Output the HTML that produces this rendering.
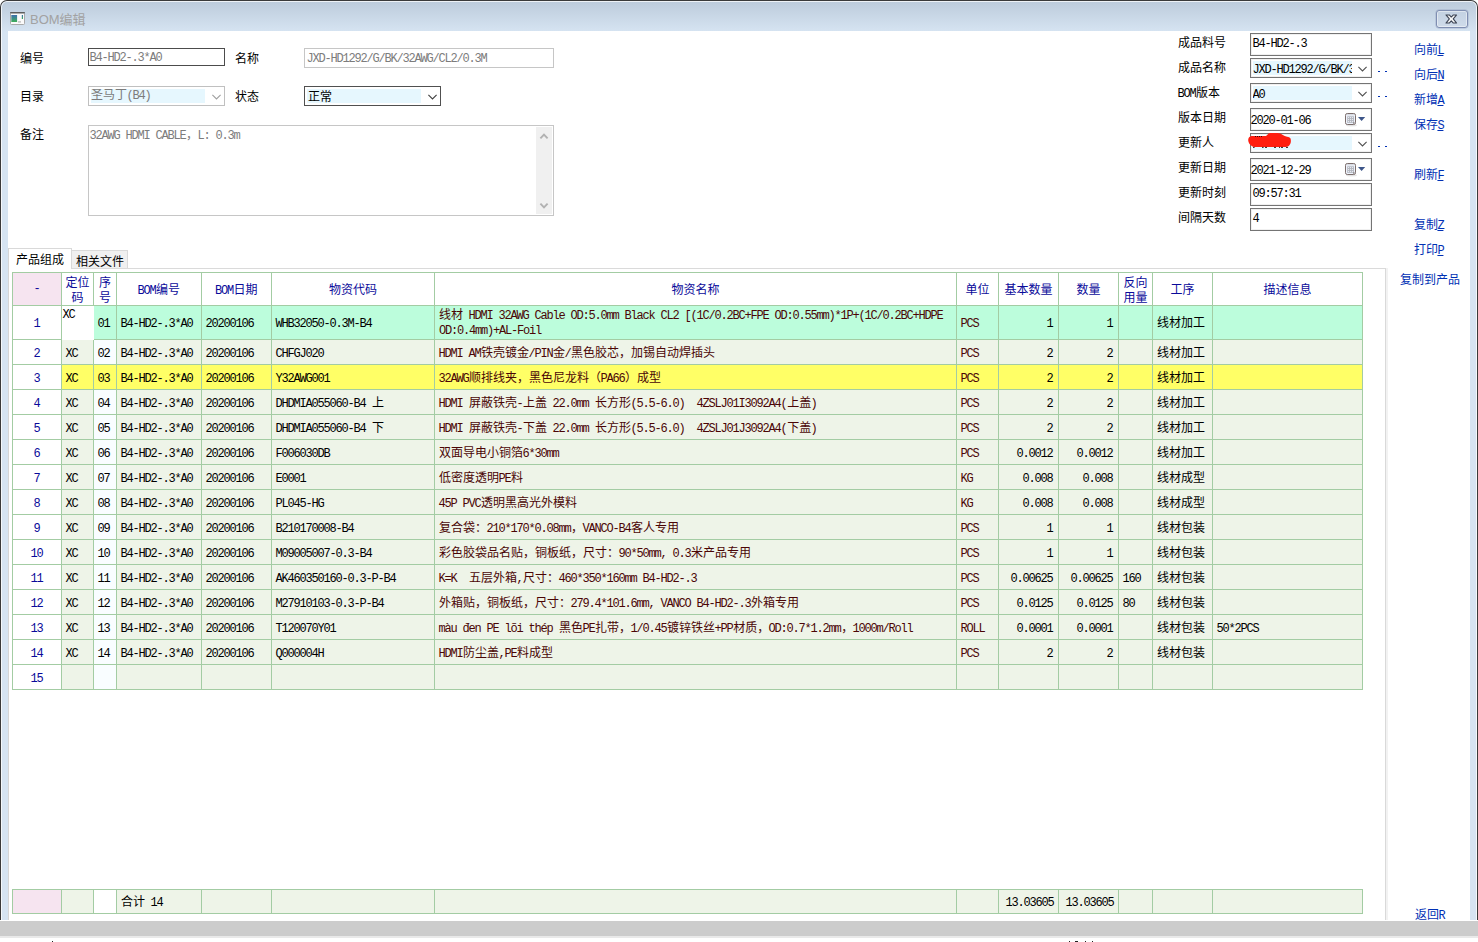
<!DOCTYPE html>
<html lang="zh-CN"><head><meta charset="utf-8"><title>BOM编辑</title>
<style>
html,body{margin:0;padding:0}
body{width:1478px;height:942px;overflow:hidden;position:relative;background:#fff;font-family:"Liberation Mono","Noto Sans CJK SC",monospace;font-size:12px;line-height:12px;color:#000}
i{font-style:normal;letter-spacing:-1.2px;margin-left:-.6px;margin-right:.6px}
u{text-decoration:underline;text-underline-offset:1px}
#win{position:absolute;left:0;top:0;width:1478px;height:920px;box-sizing:border-box;border:1px solid #3a3a3a;border-bottom:none;border-radius:7px 7px 0 0;background:linear-gradient(#bccbdb,#d6e4f2 31px,#d6e4f2 31px);overflow:hidden}
#win:before{content:"";position:absolute;left:0;top:0;right:0;bottom:0;border:1px solid rgba(255,255,255,.75);border-bottom:none;border-radius:6px 6px 0 0}
#client{position:absolute;left:8px;top:31px;width:1462px;height:889px;background:#fff;box-sizing:border-box}
#title{position:absolute;left:29px;top:12px;font-family:"Liberation Sans","Noto Sans CJK SC",sans-serif;font-size:13px;line-height:14px;color:#a2a2a2;white-space:nowrap}
#close{position:absolute;left:1435px;top:9px;width:32px;height:18px;box-sizing:border-box;border:1px solid #7f8eb1;border-radius:3px;box-shadow:inset 0 0 0 1px rgba(255,255,255,.45),0 0 0 .5px rgba(127,142,177,.5);background:linear-gradient(#c3d1e2,#cfdbea)}
.t{position:absolute;white-space:nowrap;line-height:16px}
.g{color:#7c7c7c}
.box{position:absolute;box-sizing:border-box;background:#fff}
.sel{position:absolute;background:#e6f7fe}
.chev{position:absolute}
.grid{position:absolute;background:#a3cca3}
.c{position:absolute;overflow:hidden;display:flex;align-items:center;white-space:pre;box-sizing:border-box;padding:3px 4px 0 4px}
.c.h{justify-content:center;text-align:center;color:#0a0a9a;padding:4px 0 0 0}
.c.h.two{line-height:15px;padding-top:5px}
.c.h b{font-weight:normal;position:relative;top:-2px}
.c.n{justify-content:center;color:#0a0a9a;padding:3px 0 0 0}
.c.m{color:#4a0505}
.c.r{justify-content:flex-end;padding-right:5px}
.c.f{padding-right:4px}
.c.top{align-items:flex-start;padding:3px 0 0 1px}
.c.wrap{white-space:pre-wrap;line-height:15px}
#bar{position:absolute;left:0;top:921px;width:1478px;height:15px;background:#cccccc}
  .mk{position:absolute;top:941px;width:1px;height:1px;background:#222}
#bar2{position:absolute;left:0;top:936px;width:1478px;height:2px;background:#e9e9e9}
</style></head><body>
<div id="win"><svg style="position:absolute;left:9px;top:11px" width="15" height="13" viewBox="0 0 15 13"><defs><linearGradient id="gg" x1="0" y1="0" x2="0" y2="1"><stop offset="0" stop-color="#3c6fae"/><stop offset="1" stop-color="#3fae58"/></linearGradient></defs><rect x="0.5" y="0.5" width="14" height="12" rx="1" fill="#fafafa" stroke="#a9a9a9"/><rect x="0" y="0" width="15" height="1.6" rx="0.8" fill="#5c5c5c"/><rect x="1.3" y="3" width="5.8" height="7" fill="url(#gg)"/><rect x="8" y="9.3" width="3" height="1.2" fill="#b4b4b4"/><rect x="11.8" y="3" width="1.2" height="4" fill="url(#gg)"/></svg><div id="title">BOM编辑</div><div id="close"><svg style="position:absolute;left:8px;top:3px" width="12.6" height="10.2" viewBox="0 0 13 11" preserveAspectRatio="none"><path d="M1 1 L4.4 1 L6.5 3.3 L8.6 1 L12 1 L8.5 5.3 L12 9.8 L8.6 9.8 L6.5 7.4 L4.4 9.8 L1 9.8 L4.5 5.3 Z" fill="#f6f6f6" stroke="#3b4252" stroke-width="1.1" stroke-linejoin="round"/></svg></div></div>
<div id="client"></div>
<div class="t" style="left:20px;top:52px;color:#000">编号</div><div class="t" style="left:235px;top:52px;color:#000">名称</div><div class="t" style="left:20px;top:90px;color:#000">目录</div><div class="t" style="left:235px;top:90px;color:#000">状态</div><div class="t" style="left:20px;top:128px;color:#000">备注</div><div class="box" style="left:88px;top:48px;width:137px;height:18px;border:1px solid #4c4c4c"><div class="t g" style="left:1px;top:1px"><i>B4-HD2-.3*A0</i></div></div><div class="box" style="left:304px;top:48px;width:250px;height:20px;border:1px solid #c6c6c6"><div class="t g" style="left:2px;top:2px"><i>JXD-HD1292/G/BK/32AWG/CL2/0.3M</i></div></div><div class="box" style="left:88px;top:86px;width:137px;height:20px;border:1px solid #c0c0c0"><div class="sel" style="left:2px;top:2px;width:114px;height:14px"></div><div class="t g" style="left:2px;top:1px">圣马丁<i>(B4)</i></div><svg class="chev" style="left:123px;top:7px" width="9" height="6" viewBox="0 0 9 6"><path d="M0.4 0.9 L4.5 5 L8.6 0.9" fill="none" stroke="#a0a0a0" stroke-width="1.1"/></svg></div><div class="box" style="left:304px;top:86px;width:137px;height:20px;border:1px solid #505050"><div class="sel" style="left:2px;top:2px;width:114px;height:14px"></div><div class="t" style="left:3px;top:3px">正常</div><svg class="chev" style="left:123px;top:7px" width="9" height="6" viewBox="0 0 9 6"><path d="M0.4 0.9 L4.5 5 L8.6 0.9" fill="none" stroke="#404040" stroke-width="1.1"/></svg></div><div class="box" style="left:88px;top:125px;width:466px;height:91px;border:1px solid #c6c6c6"><div class="t g" style="left:1px;top:2px"><i>32AWG HDMI CABLE</i>，<i>L: 0.3m</i></div><div style="position:absolute;right:1px;top:1px;width:16px;height:87px;background:#f0f0f0"><svg class="chev" style="left:3px;top:5px" width="10" height="8" viewBox="0 0 10 8"><path d="M1.4 6.4 L5 2.6 L8.6 6.4" fill="none" stroke="#b2b2b2" stroke-width="1.9"/></svg><svg class="chev" style="left:3px;top:75px" width="10" height="8" viewBox="0 0 10 8"><path d="M1.4 1.6 L5 5.4 L8.6 1.6" fill="none" stroke="#b2b2b2" stroke-width="1.9"/></svg></div></div><div style="position:absolute;left:9px;top:268px;width:1376px;height:1px;background:#dadada"></div><div style="position:absolute;left:71px;top:250px;width:57px;height:18px;background:#f0f0f0;border:1px solid #d9d9d9;border-bottom:none;box-sizing:border-box"><div class="t" style="left:4px;top:4px">相关文件</div></div><div style="position:absolute;left:8px;top:248px;width:64px;height:21px;background:#fff;border:1px solid #d9d9d9;border-bottom:none;box-sizing:border-box"><div class="t" style="left:7px;top:4px">产品组成</div></div><div style="position:absolute;left:8px;top:248px;width:1px;height:672px;background:#d6d6d6"></div><div style="position:absolute;left:1385px;top:268px;width:1px;height:652px;background:#d9d9d9"></div><div style="position:absolute;left:1386px;top:268px;width:2px;height:652px;background:#f2f2f2"></div><div class="t" style="left:1178px;top:36px;color:#000">成品料号</div><div class="t" style="left:1178px;top:61px;color:#000">成品名称</div><div class="t" style="left:1178px;top:86px;color:#000"><i>BOM</i>版本</div><div class="t" style="left:1178px;top:111px;color:#000">版本日期</div><div class="t" style="left:1178px;top:136px;color:#000">更新人</div><div class="t" style="left:1178px;top:161px;color:#000">更新日期</div><div class="t" style="left:1178px;top:186px;color:#000">更新时刻</div><div class="t" style="left:1178px;top:211px;color:#000">间隔天数</div><div class="box" style="left:1250px;top:33px;width:122px;height:23px;border:1px solid #747474;box-shadow:inset 0 0 0 1px #f0f0f0"><div class="t" style="left:2px;top:2px"><i>B4-HD2-.3</i></div></div><div class="box" style="left:1250px;top:58px;width:122px;height:20px;border:1px solid #747474;box-shadow:inset 0 0 0 1px #f0f0f0"><div class="sel" style="left:2px;top:2px;width:99px;height:14px;overflow:hidden"><div class="t" style="left:0px;top:1px"><i>JXD-HD1292/G/BK/32AWG</i></div></div><svg class="chev" style="left:107px;top:7px" width="9" height="6" viewBox="0 0 9 6"><path d="M0.4 0.9 L4.5 5 L8.6 0.9" fill="none" stroke="#505050" stroke-width="1.1"/></svg></div><div style="position:absolute;left:1378px;top:71px;width:2px;height:1px;background:#0030b4"></div><div style="position:absolute;left:1385px;top:71px;width:2px;height:1px;background:#0030b4"></div><div class="box" style="left:1250px;top:83px;width:122px;height:20px;border:1px solid #747474;box-shadow:inset 0 0 0 1px #f0f0f0"><div class="sel" style="left:2px;top:2px;width:99px;height:14px;overflow:hidden"><div class="t" style="left:0px;top:1px"><i>A0</i></div></div><svg class="chev" style="left:107px;top:7px" width="9" height="6" viewBox="0 0 9 6"><path d="M0.4 0.9 L4.5 5 L8.6 0.9" fill="none" stroke="#505050" stroke-width="1.1"/></svg></div><div style="position:absolute;left:1378px;top:96px;width:2px;height:1px;background:#0030b4"></div><div style="position:absolute;left:1385px;top:96px;width:2px;height:1px;background:#0030b4"></div><div class="box" style="left:1250px;top:108px;width:122px;height:23px;border:1px solid #747474;box-shadow:inset 0 0 0 1px #f0f0f0"><div class="t" style="left:0px;top:4px"><i>2020-01-06</i></div><svg style="position:absolute;left:93px;top:3px" width="26" height="15" viewBox="0 0 26 15"><ellipse cx="7.5" cy="13.2" rx="5.5" ry="1.2" fill="#000" opacity=".10"/><rect x="1.5" y="1.5" width="10" height="11" rx="1.8" fill="#eef3fc" stroke="#7b6d6b" stroke-width="1"/><path d="M2.8 2.8 H10.2" stroke="#c9c9cf" stroke-width="0.8"/><rect x="3.2" y="4.3" width="6.8" height="6.6" fill="#b3b6bf"/><g fill="#f4f6fb"><rect x="4.1" y="5.1" width="1" height="1"/><rect x="6.1" y="5.1" width="1" height="1"/><rect x="8.1" y="5.1" width="1" height="1"/><rect x="4.1" y="7.1" width="1" height="1"/><rect x="6.1" y="7.1" width="1" height="1"/><rect x="8.1" y="7.1" width="1" height="1"/><rect x="4.1" y="9.1" width="1" height="1"/><rect x="6.1" y="9.1" width="1" height="1"/><rect x="8.1" y="9.1" width="1" height="1"/></g><path d="M9.2 12 L9.2 10.4 L11 10.4 Z" fill="#6b5d5b"/><path d="M14 5 H21.2 L17.6 9 Z" fill="#3d5689"/></svg></div><div class="box" style="left:1250px;top:133px;width:122px;height:20px;border:1px solid #747474;box-shadow:inset 0 0 0 1px #f0f0f0"><div class="sel" style="left:2px;top:2px;width:99px;height:14px;overflow:hidden"><div class="t" style="left:0px;top:1px"></div></div><svg class="chev" style="left:107px;top:7px" width="9" height="6" viewBox="0 0 9 6"><path d="M0.4 0.9 L4.5 5 L8.6 0.9" fill="none" stroke="#505050" stroke-width="1.1"/></svg></div><div style="position:absolute;left:1378px;top:146px;width:2px;height:1px;background:#0030b4"></div><div style="position:absolute;left:1385px;top:146px;width:2px;height:1px;background:#0030b4"></div><div class="box" style="left:1250px;top:158px;width:122px;height:23px;border:1px solid #747474;box-shadow:inset 0 0 0 1px #f0f0f0"><div class="t" style="left:0px;top:4px"><i>2021-12-29</i></div><svg style="position:absolute;left:93px;top:3px" width="26" height="15" viewBox="0 0 26 15"><ellipse cx="7.5" cy="13.2" rx="5.5" ry="1.2" fill="#000" opacity=".10"/><rect x="1.5" y="1.5" width="10" height="11" rx="1.8" fill="#eef3fc" stroke="#7b6d6b" stroke-width="1"/><path d="M2.8 2.8 H10.2" stroke="#c9c9cf" stroke-width="0.8"/><rect x="3.2" y="4.3" width="6.8" height="6.6" fill="#b3b6bf"/><g fill="#f4f6fb"><rect x="4.1" y="5.1" width="1" height="1"/><rect x="6.1" y="5.1" width="1" height="1"/><rect x="8.1" y="5.1" width="1" height="1"/><rect x="4.1" y="7.1" width="1" height="1"/><rect x="6.1" y="7.1" width="1" height="1"/><rect x="8.1" y="7.1" width="1" height="1"/><rect x="4.1" y="9.1" width="1" height="1"/><rect x="6.1" y="9.1" width="1" height="1"/><rect x="8.1" y="9.1" width="1" height="1"/></g><path d="M9.2 12 L9.2 10.4 L11 10.4 Z" fill="#6b5d5b"/><path d="M14 5 H21.2 L17.6 9 Z" fill="#3d5689"/></svg></div><div class="box" style="left:1250px;top:183px;width:122px;height:23px;border:1px solid #747474;box-shadow:inset 0 0 0 1px #f0f0f0"><div class="t" style="left:2px;top:2px"><i>09:57:31</i></div></div><div class="box" style="left:1250px;top:208px;width:122px;height:23px;border:1px solid #747474;box-shadow:inset 0 0 0 1px #f0f0f0"><div class="t" style="left:2px;top:2px"><i>4</i></div></div><svg style="position:absolute;left:1246px;top:131px" width="48" height="20" viewBox="0 0 48 20"><path d="M2.2 9 C2.3 7.4 3 6.2 4.2 5.6 C5 5.2 6 5.1 7 5.1 L19.6 5.1 C20.8 5.1 21.2 4 22 3.1 C22.8 2.4 23.6 2.1 24.8 2.1 L31.5 2.1 C33.4 2.2 34.8 3 36.4 3.7 C38 4.5 39.4 5.3 41 5.7 C42.6 6 43.8 6.2 44.4 7.2 C45 8.4 45 10.6 44.6 12 C44.2 13.6 43.2 14.8 41.8 15.5 C41 15.9 40.4 15.9 39.6 15.9 L8.4 15.9 C6.6 15.8 5.4 15 4.2 13.8 C3 12.6 2.2 10.8 2.2 9 Z" fill="#ff1e10"/><path d="M9 5.5h1M11 5.5h1M13 5.5h1M15 5.5h1M7 16.4h1.6M16 16.4h1.6M19 16.4h2M28 16.4h2M33 16.4h1M35 16.4h2M40 16.4h2" stroke="#1a0a0a" stroke-width="0.9"/></svg><div class="t" style="left:1414px;top:43px;color:#0030b4">向前<i><u>L</u></i></div><div class="t" style="left:1414px;top:68px;color:#0030b4">向后<i><u>N</u></i></div><div class="t" style="left:1414px;top:93px;color:#0030b4">新增<i><u>A</u></i></div><div class="t" style="left:1414px;top:118px;color:#0030b4">保存<i><u>S</u></i></div><div class="t" style="left:1414px;top:168px;color:#0030b4">刷新<i><u>F</u></i></div><div class="t" style="left:1414px;top:218px;color:#0030b4">复制<i><u>Z</u></i></div><div class="t" style="left:1414px;top:243px;color:#0030b4">打印<i><u>P</u></i></div><div class="t" style="left:1400px;top:273px;color:#0030b4">复制到产品</div><div class="t" style="left:1415px;top:908px;color:#0030b4">返回<i>R</i></div>
<div class="grid" style="left:12px;top:272px;width:1351px;height:418px"></div><div class="c h" style="left:13px;top:273px;width:48px;height:32px;background:#f6e4f0;"><span><b><i>-</i></b></span></div><div class="c h two" style="left:62px;top:273px;width:31px;height:32px;background:#fff;"><span>定位<br>码</span></div><div class="c h two" style="left:94px;top:273px;width:22px;height:32px;background:#fff;"><span>序<br>号</span></div><div class="c h" style="left:117px;top:273px;width:84px;height:32px;background:#fff;"><span><i>BOM</i>编号</span></div><div class="c h" style="left:202px;top:273px;width:69px;height:32px;background:#fff;"><span><i>BOM</i>日期</span></div><div class="c h" style="left:272px;top:273px;width:162px;height:32px;background:#fff;"><span>物资代码</span></div><div class="c h" style="left:435px;top:273px;width:521px;height:32px;background:#fff;"><span>物资名称</span></div><div class="c h" style="left:957px;top:273px;width:41px;height:32px;background:#fff;"><span>单位</span></div><div class="c h" style="left:999px;top:273px;width:59px;height:32px;background:#fff;"><span>基本数量</span></div><div class="c h" style="left:1059px;top:273px;width:59px;height:32px;background:#fff;"><span>数量</span></div><div class="c h two" style="left:1119px;top:273px;width:33px;height:32px;background:#fff;"><span>反向<br>用量</span></div><div class="c h" style="left:1153px;top:273px;width:59px;height:32px;background:#fff;"><span>工序</span></div><div class="c h" style="left:1213px;top:273px;width:149px;height:32px;background:#fff;"><span>描述信息</span></div><div class="c n" style="left:13px;top:306px;width:48px;height:33px;background:#fff;"><span><i>1</i></span></div><div class="c top" style="left:62px;top:306px;width:32px;height:34px;background:#fff;z-index:2"><span><i>XC</i></span></div><div class="c " style="left:94px;top:306px;width:22px;height:33px;background:#bcfddc;"><span><i>01</i></span></div><div class="c " style="left:117px;top:306px;width:84px;height:33px;background:#bcfddc;"><span><i>B4-HD2-.3*A0</i></span></div><div class="c " style="left:202px;top:306px;width:69px;height:33px;background:#bcfddc;"><span><i>20200106</i></span></div><div class="c " style="left:272px;top:306px;width:162px;height:33px;background:#bcfddc;"><span><i>WHB32050-0.3M-B4</i></span></div><div class="c  m wrap" style="left:435px;top:306px;width:521px;height:33px;background:#bcfddc;"><span>线材<i> HDMI 32AWG Cable OD:5.0mm Black CL2 [(1C/0.2BC+FPE OD:0.55mm)*1P+(1C/0.2BC+HDPE OD:0.4mm)+AL-Foil</i></span></div><div class="c  m" style="left:957px;top:306px;width:41px;height:33px;background:#bcfddc;"><span><i>PCS</i></span></div><div class="c  r" style="left:999px;top:306px;width:59px;height:33px;background:#bcfddc;"><span><i>1</i></span></div><div class="c  r" style="left:1059px;top:306px;width:59px;height:33px;background:#bcfddc;"><span><i>1</i></span></div><div class="c " style="left:1119px;top:306px;width:33px;height:33px;background:#bcfddc;"></div><div class="c " style="left:1153px;top:306px;width:59px;height:33px;background:#bcfddc;"><span>线材加工</span></div><div class="c " style="left:1213px;top:306px;width:149px;height:33px;background:#bcfddc;"></div><div class="c n" style="left:13px;top:340px;width:48px;height:24px;background:#fff;"><span><i>2</i></span></div><div class="c " style="left:62px;top:340px;width:31px;height:24px;background:#eef4e8;"><span><i>XC</i></span></div><div class="c " style="left:94px;top:340px;width:22px;height:24px;background:#f9fdff;"><span><i>02</i></span></div><div class="c " style="left:117px;top:340px;width:84px;height:24px;background:#eef4e8;"><span><i>B4-HD2-.3*A0</i></span></div><div class="c " style="left:202px;top:340px;width:69px;height:24px;background:#eef4e8;"><span><i>20200106</i></span></div><div class="c " style="left:272px;top:340px;width:162px;height:24px;background:#eef4e8;"><span><i>CHFGJ020</i></span></div><div class="c  m" style="left:435px;top:340px;width:521px;height:24px;background:#eef4e8;"><span><i>HDMI AM</i>铁壳镀金<i>/PIN</i>金<i>/</i>黑色胶芯，加锡自动焊插头</span></div><div class="c  m" style="left:957px;top:340px;width:41px;height:24px;background:#eef4e8;"><span><i>PCS</i></span></div><div class="c  r" style="left:999px;top:340px;width:59px;height:24px;background:#eef4e8;"><span><i>2</i></span></div><div class="c  r" style="left:1059px;top:340px;width:59px;height:24px;background:#eef4e8;"><span><i>2</i></span></div><div class="c " style="left:1119px;top:340px;width:33px;height:24px;background:#eef4e8;"></div><div class="c " style="left:1153px;top:340px;width:59px;height:24px;background:#eef4e8;"><span>线材加工</span></div><div class="c " style="left:1213px;top:340px;width:149px;height:24px;background:#eef4e8;"></div><div class="c n" style="left:13px;top:365px;width:48px;height:24px;background:#fff;"><span><i>3</i></span></div><div class="c " style="left:62px;top:365px;width:31px;height:24px;background:#ffff66;"><span><i>XC</i></span></div><div class="c " style="left:94px;top:365px;width:22px;height:24px;background:#ffff66;"><span><i>03</i></span></div><div class="c " style="left:117px;top:365px;width:84px;height:24px;background:#ffff66;"><span><i>B4-HD2-.3*A0</i></span></div><div class="c " style="left:202px;top:365px;width:69px;height:24px;background:#ffff66;"><span><i>20200106</i></span></div><div class="c " style="left:272px;top:365px;width:162px;height:24px;background:#ffff66;"><span><i>Y32AWG001</i></span></div><div class="c  m" style="left:435px;top:365px;width:521px;height:24px;background:#ffff66;"><span><i>32AWG</i>顺排线夹，黑色尼龙料（<i>PA66</i>）成型</span></div><div class="c  m" style="left:957px;top:365px;width:41px;height:24px;background:#ffff66;"><span><i>PCS</i></span></div><div class="c  r" style="left:999px;top:365px;width:59px;height:24px;background:#ffff66;"><span><i>2</i></span></div><div class="c  r" style="left:1059px;top:365px;width:59px;height:24px;background:#ffff66;"><span><i>2</i></span></div><div class="c " style="left:1119px;top:365px;width:33px;height:24px;background:#ffff66;"></div><div class="c " style="left:1153px;top:365px;width:59px;height:24px;background:#ffff66;"><span>线材加工</span></div><div class="c " style="left:1213px;top:365px;width:149px;height:24px;background:#ffff66;"></div><div class="c n" style="left:13px;top:390px;width:48px;height:24px;background:#fff;"><span><i>4</i></span></div><div class="c " style="left:62px;top:390px;width:31px;height:24px;background:#eef4e8;"><span><i>XC</i></span></div><div class="c " style="left:94px;top:390px;width:22px;height:24px;background:#f9fdff;"><span><i>04</i></span></div><div class="c " style="left:117px;top:390px;width:84px;height:24px;background:#eef4e8;"><span><i>B4-HD2-.3*A0</i></span></div><div class="c " style="left:202px;top:390px;width:69px;height:24px;background:#eef4e8;"><span><i>20200106</i></span></div><div class="c " style="left:272px;top:390px;width:162px;height:24px;background:#eef4e8;"><span><i>DHDMIA055060-B4 </i>上</span></div><div class="c  m" style="left:435px;top:390px;width:521px;height:24px;background:#eef4e8;"><span><i>HDMI </i>屏蔽铁壳<i>-</i>上盖<i> 22.0mm </i>长方形<i>(5.5-6.0)  4ZSLJ01I3092A4(</i>上盖<i>)</i></span></div><div class="c  m" style="left:957px;top:390px;width:41px;height:24px;background:#eef4e8;"><span><i>PCS</i></span></div><div class="c  r" style="left:999px;top:390px;width:59px;height:24px;background:#eef4e8;"><span><i>2</i></span></div><div class="c  r" style="left:1059px;top:390px;width:59px;height:24px;background:#eef4e8;"><span><i>2</i></span></div><div class="c " style="left:1119px;top:390px;width:33px;height:24px;background:#eef4e8;"></div><div class="c " style="left:1153px;top:390px;width:59px;height:24px;background:#eef4e8;"><span>线材加工</span></div><div class="c " style="left:1213px;top:390px;width:149px;height:24px;background:#eef4e8;"></div><div class="c n" style="left:13px;top:415px;width:48px;height:24px;background:#fff;"><span><i>5</i></span></div><div class="c " style="left:62px;top:415px;width:31px;height:24px;background:#eef4e8;"><span><i>XC</i></span></div><div class="c " style="left:94px;top:415px;width:22px;height:24px;background:#f9fdff;"><span><i>05</i></span></div><div class="c " style="left:117px;top:415px;width:84px;height:24px;background:#eef4e8;"><span><i>B4-HD2-.3*A0</i></span></div><div class="c " style="left:202px;top:415px;width:69px;height:24px;background:#eef4e8;"><span><i>20200106</i></span></div><div class="c " style="left:272px;top:415px;width:162px;height:24px;background:#eef4e8;"><span><i>DHDMIA055060-B4 </i>下</span></div><div class="c  m" style="left:435px;top:415px;width:521px;height:24px;background:#eef4e8;"><span><i>HDMI </i>屏蔽铁壳<i>-</i>下盖<i> 22.0mm </i>长方形<i>(5.5-6.0)  4ZSLJ01J3092A4(</i>下盖<i>)</i></span></div><div class="c  m" style="left:957px;top:415px;width:41px;height:24px;background:#eef4e8;"><span><i>PCS</i></span></div><div class="c  r" style="left:999px;top:415px;width:59px;height:24px;background:#eef4e8;"><span><i>2</i></span></div><div class="c  r" style="left:1059px;top:415px;width:59px;height:24px;background:#eef4e8;"><span><i>2</i></span></div><div class="c " style="left:1119px;top:415px;width:33px;height:24px;background:#eef4e8;"></div><div class="c " style="left:1153px;top:415px;width:59px;height:24px;background:#eef4e8;"><span>线材加工</span></div><div class="c " style="left:1213px;top:415px;width:149px;height:24px;background:#eef4e8;"></div><div class="c n" style="left:13px;top:440px;width:48px;height:24px;background:#fff;"><span><i>6</i></span></div><div class="c " style="left:62px;top:440px;width:31px;height:24px;background:#eef4e8;"><span><i>XC</i></span></div><div class="c " style="left:94px;top:440px;width:22px;height:24px;background:#f9fdff;"><span><i>06</i></span></div><div class="c " style="left:117px;top:440px;width:84px;height:24px;background:#eef4e8;"><span><i>B4-HD2-.3*A0</i></span></div><div class="c " style="left:202px;top:440px;width:69px;height:24px;background:#eef4e8;"><span><i>20200106</i></span></div><div class="c " style="left:272px;top:440px;width:162px;height:24px;background:#eef4e8;"><span><i>F006030DB</i></span></div><div class="c  m" style="left:435px;top:440px;width:521px;height:24px;background:#eef4e8;"><span>双面导电小铜箔<i>6*30mm</i></span></div><div class="c  m" style="left:957px;top:440px;width:41px;height:24px;background:#eef4e8;"><span><i>PCS</i></span></div><div class="c  r" style="left:999px;top:440px;width:59px;height:24px;background:#eef4e8;"><span><i>0.0012</i></span></div><div class="c  r" style="left:1059px;top:440px;width:59px;height:24px;background:#eef4e8;"><span><i>0.0012</i></span></div><div class="c " style="left:1119px;top:440px;width:33px;height:24px;background:#eef4e8;"></div><div class="c " style="left:1153px;top:440px;width:59px;height:24px;background:#eef4e8;"><span>线材加工</span></div><div class="c " style="left:1213px;top:440px;width:149px;height:24px;background:#eef4e8;"></div><div class="c n" style="left:13px;top:465px;width:48px;height:24px;background:#fff;"><span><i>7</i></span></div><div class="c " style="left:62px;top:465px;width:31px;height:24px;background:#eef4e8;"><span><i>XC</i></span></div><div class="c " style="left:94px;top:465px;width:22px;height:24px;background:#f9fdff;"><span><i>07</i></span></div><div class="c " style="left:117px;top:465px;width:84px;height:24px;background:#eef4e8;"><span><i>B4-HD2-.3*A0</i></span></div><div class="c " style="left:202px;top:465px;width:69px;height:24px;background:#eef4e8;"><span><i>20200106</i></span></div><div class="c " style="left:272px;top:465px;width:162px;height:24px;background:#eef4e8;"><span><i>E0001</i></span></div><div class="c  m" style="left:435px;top:465px;width:521px;height:24px;background:#eef4e8;"><span>低密度透明<i>PE</i>料</span></div><div class="c  m" style="left:957px;top:465px;width:41px;height:24px;background:#eef4e8;"><span><i>KG</i></span></div><div class="c  r" style="left:999px;top:465px;width:59px;height:24px;background:#eef4e8;"><span><i>0.008</i></span></div><div class="c  r" style="left:1059px;top:465px;width:59px;height:24px;background:#eef4e8;"><span><i>0.008</i></span></div><div class="c " style="left:1119px;top:465px;width:33px;height:24px;background:#eef4e8;"></div><div class="c " style="left:1153px;top:465px;width:59px;height:24px;background:#eef4e8;"><span>线材成型</span></div><div class="c " style="left:1213px;top:465px;width:149px;height:24px;background:#eef4e8;"></div><div class="c n" style="left:13px;top:490px;width:48px;height:24px;background:#fff;"><span><i>8</i></span></div><div class="c " style="left:62px;top:490px;width:31px;height:24px;background:#eef4e8;"><span><i>XC</i></span></div><div class="c " style="left:94px;top:490px;width:22px;height:24px;background:#f9fdff;"><span><i>08</i></span></div><div class="c " style="left:117px;top:490px;width:84px;height:24px;background:#eef4e8;"><span><i>B4-HD2-.3*A0</i></span></div><div class="c " style="left:202px;top:490px;width:69px;height:24px;background:#eef4e8;"><span><i>20200106</i></span></div><div class="c " style="left:272px;top:490px;width:162px;height:24px;background:#eef4e8;"><span><i>PL045-HG</i></span></div><div class="c  m" style="left:435px;top:490px;width:521px;height:24px;background:#eef4e8;"><span><i>45P PVC</i>透明黑高光外模料</span></div><div class="c  m" style="left:957px;top:490px;width:41px;height:24px;background:#eef4e8;"><span><i>KG</i></span></div><div class="c  r" style="left:999px;top:490px;width:59px;height:24px;background:#eef4e8;"><span><i>0.008</i></span></div><div class="c  r" style="left:1059px;top:490px;width:59px;height:24px;background:#eef4e8;"><span><i>0.008</i></span></div><div class="c " style="left:1119px;top:490px;width:33px;height:24px;background:#eef4e8;"></div><div class="c " style="left:1153px;top:490px;width:59px;height:24px;background:#eef4e8;"><span>线材成型</span></div><div class="c " style="left:1213px;top:490px;width:149px;height:24px;background:#eef4e8;"></div><div class="c n" style="left:13px;top:515px;width:48px;height:24px;background:#fff;"><span><i>9</i></span></div><div class="c " style="left:62px;top:515px;width:31px;height:24px;background:#eef4e8;"><span><i>XC</i></span></div><div class="c " style="left:94px;top:515px;width:22px;height:24px;background:#f9fdff;"><span><i>09</i></span></div><div class="c " style="left:117px;top:515px;width:84px;height:24px;background:#eef4e8;"><span><i>B4-HD2-.3*A0</i></span></div><div class="c " style="left:202px;top:515px;width:69px;height:24px;background:#eef4e8;"><span><i>20200106</i></span></div><div class="c " style="left:272px;top:515px;width:162px;height:24px;background:#eef4e8;"><span><i>B210170008-B4</i></span></div><div class="c  m" style="left:435px;top:515px;width:521px;height:24px;background:#eef4e8;"><span>复合袋：<i>210*170*0.08mm</i>，<i>VANCO-B4</i>客人专用</span></div><div class="c  m" style="left:957px;top:515px;width:41px;height:24px;background:#eef4e8;"><span><i>PCS</i></span></div><div class="c  r" style="left:999px;top:515px;width:59px;height:24px;background:#eef4e8;"><span><i>1</i></span></div><div class="c  r" style="left:1059px;top:515px;width:59px;height:24px;background:#eef4e8;"><span><i>1</i></span></div><div class="c " style="left:1119px;top:515px;width:33px;height:24px;background:#eef4e8;"></div><div class="c " style="left:1153px;top:515px;width:59px;height:24px;background:#eef4e8;"><span>线材包装</span></div><div class="c " style="left:1213px;top:515px;width:149px;height:24px;background:#eef4e8;"></div><div class="c n" style="left:13px;top:540px;width:48px;height:24px;background:#fff;"><span><i>10</i></span></div><div class="c " style="left:62px;top:540px;width:31px;height:24px;background:#eef4e8;"><span><i>XC</i></span></div><div class="c " style="left:94px;top:540px;width:22px;height:24px;background:#f9fdff;"><span><i>10</i></span></div><div class="c " style="left:117px;top:540px;width:84px;height:24px;background:#eef4e8;"><span><i>B4-HD2-.3*A0</i></span></div><div class="c " style="left:202px;top:540px;width:69px;height:24px;background:#eef4e8;"><span><i>20200106</i></span></div><div class="c " style="left:272px;top:540px;width:162px;height:24px;background:#eef4e8;"><span><i>M09005007-0.3-B4</i></span></div><div class="c  m" style="left:435px;top:540px;width:521px;height:24px;background:#eef4e8;"><span>彩色胶袋品名贴，铜板纸，尺寸：<i>90*50mm, 0.3</i>米产品专用</span></div><div class="c  m" style="left:957px;top:540px;width:41px;height:24px;background:#eef4e8;"><span><i>PCS</i></span></div><div class="c  r" style="left:999px;top:540px;width:59px;height:24px;background:#eef4e8;"><span><i>1</i></span></div><div class="c  r" style="left:1059px;top:540px;width:59px;height:24px;background:#eef4e8;"><span><i>1</i></span></div><div class="c " style="left:1119px;top:540px;width:33px;height:24px;background:#eef4e8;"></div><div class="c " style="left:1153px;top:540px;width:59px;height:24px;background:#eef4e8;"><span>线材包装</span></div><div class="c " style="left:1213px;top:540px;width:149px;height:24px;background:#eef4e8;"></div><div class="c n" style="left:13px;top:565px;width:48px;height:24px;background:#fff;"><span><i>11</i></span></div><div class="c " style="left:62px;top:565px;width:31px;height:24px;background:#eef4e8;"><span><i>XC</i></span></div><div class="c " style="left:94px;top:565px;width:22px;height:24px;background:#f9fdff;"><span><i>11</i></span></div><div class="c " style="left:117px;top:565px;width:84px;height:24px;background:#eef4e8;"><span><i>B4-HD2-.3*A0</i></span></div><div class="c " style="left:202px;top:565px;width:69px;height:24px;background:#eef4e8;"><span><i>20200106</i></span></div><div class="c " style="left:272px;top:565px;width:162px;height:24px;background:#eef4e8;"><span><i>AK460350160-0.3-P-B4</i></span></div><div class="c  m" style="left:435px;top:565px;width:521px;height:24px;background:#eef4e8;"><span><i>K=K  </i>五层外箱<i>,</i>尺寸：<i>460*350*160mm B4-HD2-.3</i></span></div><div class="c  m" style="left:957px;top:565px;width:41px;height:24px;background:#eef4e8;"><span><i>PCS</i></span></div><div class="c  r" style="left:999px;top:565px;width:59px;height:24px;background:#eef4e8;"><span><i>0.00625</i></span></div><div class="c  r" style="left:1059px;top:565px;width:59px;height:24px;background:#eef4e8;"><span><i>0.00625</i></span></div><div class="c " style="left:1119px;top:565px;width:33px;height:24px;background:#eef4e8;"><span><i>160</i></span></div><div class="c " style="left:1153px;top:565px;width:59px;height:24px;background:#eef4e8;"><span>线材包装</span></div><div class="c " style="left:1213px;top:565px;width:149px;height:24px;background:#eef4e8;"></div><div class="c n" style="left:13px;top:590px;width:48px;height:24px;background:#fff;"><span><i>12</i></span></div><div class="c " style="left:62px;top:590px;width:31px;height:24px;background:#eef4e8;"><span><i>XC</i></span></div><div class="c " style="left:94px;top:590px;width:22px;height:24px;background:#f9fdff;"><span><i>12</i></span></div><div class="c " style="left:117px;top:590px;width:84px;height:24px;background:#eef4e8;"><span><i>B4-HD2-.3*A0</i></span></div><div class="c " style="left:202px;top:590px;width:69px;height:24px;background:#eef4e8;"><span><i>20200106</i></span></div><div class="c " style="left:272px;top:590px;width:162px;height:24px;background:#eef4e8;"><span><i>M27910103-0.3-P-B4</i></span></div><div class="c  m" style="left:435px;top:590px;width:521px;height:24px;background:#eef4e8;"><span>外箱贴，铜板纸，尺寸：<i>279.4*101.6mm, VANCO B4-HD2-.3</i>外箱专用</span></div><div class="c  m" style="left:957px;top:590px;width:41px;height:24px;background:#eef4e8;"><span><i>PCS</i></span></div><div class="c  r" style="left:999px;top:590px;width:59px;height:24px;background:#eef4e8;"><span><i>0.0125</i></span></div><div class="c  r" style="left:1059px;top:590px;width:59px;height:24px;background:#eef4e8;"><span><i>0.0125</i></span></div><div class="c " style="left:1119px;top:590px;width:33px;height:24px;background:#eef4e8;"><span><i>80</i></span></div><div class="c " style="left:1153px;top:590px;width:59px;height:24px;background:#eef4e8;"><span>线材包装</span></div><div class="c " style="left:1213px;top:590px;width:149px;height:24px;background:#eef4e8;"></div><div class="c n" style="left:13px;top:615px;width:48px;height:24px;background:#fff;"><span><i>13</i></span></div><div class="c " style="left:62px;top:615px;width:31px;height:24px;background:#eef4e8;"><span><i>XC</i></span></div><div class="c " style="left:94px;top:615px;width:22px;height:24px;background:#f9fdff;"><span><i>13</i></span></div><div class="c " style="left:117px;top:615px;width:84px;height:24px;background:#eef4e8;"><span><i>B4-HD2-.3*A0</i></span></div><div class="c " style="left:202px;top:615px;width:69px;height:24px;background:#eef4e8;"><span><i>20200106</i></span></div><div class="c " style="left:272px;top:615px;width:162px;height:24px;background:#eef4e8;"><span><i>T120070Y01</i></span></div><div class="c  m" style="left:435px;top:615px;width:521px;height:24px;background:#eef4e8;"><span><i>màu đen PE lõi thép </i>黑色<i>PE</i>扎带，<i>1/0.45</i>镀锌铁丝<i>+PP</i>材质，<i>OD:0.7*1.2mm</i>，<i>1000m/Roll</i></span></div><div class="c  m" style="left:957px;top:615px;width:41px;height:24px;background:#eef4e8;"><span><i>ROLL</i></span></div><div class="c  r" style="left:999px;top:615px;width:59px;height:24px;background:#eef4e8;"><span><i>0.0001</i></span></div><div class="c  r" style="left:1059px;top:615px;width:59px;height:24px;background:#eef4e8;"><span><i>0.0001</i></span></div><div class="c " style="left:1119px;top:615px;width:33px;height:24px;background:#eef4e8;"></div><div class="c " style="left:1153px;top:615px;width:59px;height:24px;background:#eef4e8;"><span>线材包装</span></div><div class="c " style="left:1213px;top:615px;width:149px;height:24px;background:#eef4e8;"><span><i>50*2PCS</i></span></div><div class="c n" style="left:13px;top:640px;width:48px;height:24px;background:#fff;"><span><i>14</i></span></div><div class="c " style="left:62px;top:640px;width:31px;height:24px;background:#eef4e8;"><span><i>XC</i></span></div><div class="c " style="left:94px;top:640px;width:22px;height:24px;background:#f9fdff;"><span><i>14</i></span></div><div class="c " style="left:117px;top:640px;width:84px;height:24px;background:#eef4e8;"><span><i>B4-HD2-.3*A0</i></span></div><div class="c " style="left:202px;top:640px;width:69px;height:24px;background:#eef4e8;"><span><i>20200106</i></span></div><div class="c " style="left:272px;top:640px;width:162px;height:24px;background:#eef4e8;"><span><i>Q000004H</i></span></div><div class="c  m" style="left:435px;top:640px;width:521px;height:24px;background:#eef4e8;"><span><i>HDMI</i>防尘盖<i>,PE</i>料成型</span></div><div class="c  m" style="left:957px;top:640px;width:41px;height:24px;background:#eef4e8;"><span><i>PCS</i></span></div><div class="c  r" style="left:999px;top:640px;width:59px;height:24px;background:#eef4e8;"><span><i>2</i></span></div><div class="c  r" style="left:1059px;top:640px;width:59px;height:24px;background:#eef4e8;"><span><i>2</i></span></div><div class="c " style="left:1119px;top:640px;width:33px;height:24px;background:#eef4e8;"></div><div class="c " style="left:1153px;top:640px;width:59px;height:24px;background:#eef4e8;"><span>线材包装</span></div><div class="c " style="left:1213px;top:640px;width:149px;height:24px;background:#eef4e8;"></div><div class="c n" style="left:13px;top:665px;width:48px;height:24px;background:#fff;"><span><i>15</i></span></div><div class="c " style="left:62px;top:665px;width:31px;height:24px;background:#eef4e8;"></div><div class="c " style="left:94px;top:665px;width:22px;height:24px;background:#f9fdff;"></div><div class="c " style="left:117px;top:665px;width:84px;height:24px;background:#eef4e8;"></div><div class="c " style="left:202px;top:665px;width:69px;height:24px;background:#eef4e8;"></div><div class="c " style="left:272px;top:665px;width:162px;height:24px;background:#eef4e8;"></div><div class="c  m" style="left:435px;top:665px;width:521px;height:24px;background:#eef4e8;"></div><div class="c  m" style="left:957px;top:665px;width:41px;height:24px;background:#eef4e8;"></div><div class="c  r" style="left:999px;top:665px;width:59px;height:24px;background:#eef4e8;"></div><div class="c  r" style="left:1059px;top:665px;width:59px;height:24px;background:#eef4e8;"></div><div class="c " style="left:1119px;top:665px;width:33px;height:24px;background:#eef4e8;"></div><div class="c " style="left:1153px;top:665px;width:59px;height:24px;background:#eef4e8;"></div><div class="c " style="left:1213px;top:665px;width:149px;height:24px;background:#eef4e8;"></div><div class="grid" style="left:12px;top:889px;width:1351px;height:25px"></div><div class="c " style="left:13px;top:890px;width:48px;height:23px;background:#f6e4f0;"></div><div class="c " style="left:62px;top:890px;width:31px;height:23px;background:#eef4e8;"></div><div class="c " style="left:94px;top:890px;width:22px;height:23px;background:#fff;"></div><div class="c " style="left:117px;top:890px;width:84px;height:23px;background:#eef4e8;"><span>合计<i> 14</i></span></div><div class="c " style="left:202px;top:890px;width:69px;height:23px;background:#eef4e8;"></div><div class="c " style="left:272px;top:890px;width:162px;height:23px;background:#eef4e8;"></div><div class="c " style="left:435px;top:890px;width:521px;height:23px;background:#eef4e8;"></div><div class="c " style="left:957px;top:890px;width:41px;height:23px;background:#eef4e8;"></div><div class="c r f" style="left:999px;top:890px;width:59px;height:23px;background:#eef4e8;"><span><i>13.03605</i></span></div><div class="c r f" style="left:1059px;top:890px;width:59px;height:23px;background:#eef4e8;"><span><i>13.03605</i></span></div><div class="c " style="left:1119px;top:890px;width:33px;height:23px;background:#eef4e8;"></div><div class="c " style="left:1153px;top:890px;width:59px;height:23px;background:#eef4e8;"></div><div class="c " style="left:1213px;top:890px;width:149px;height:23px;background:#eef4e8;"></div>
<div id="bar"></div><div id="bar2"></div><div class="mk" style="left:52px"></div><div class="mk" style="left:1069px"></div><div class="mk" style="left:1075px;width:3px"></div><div class="mk" style="left:1085px"></div><div class="mk" style="left:1092px"></div>
</body></html>
